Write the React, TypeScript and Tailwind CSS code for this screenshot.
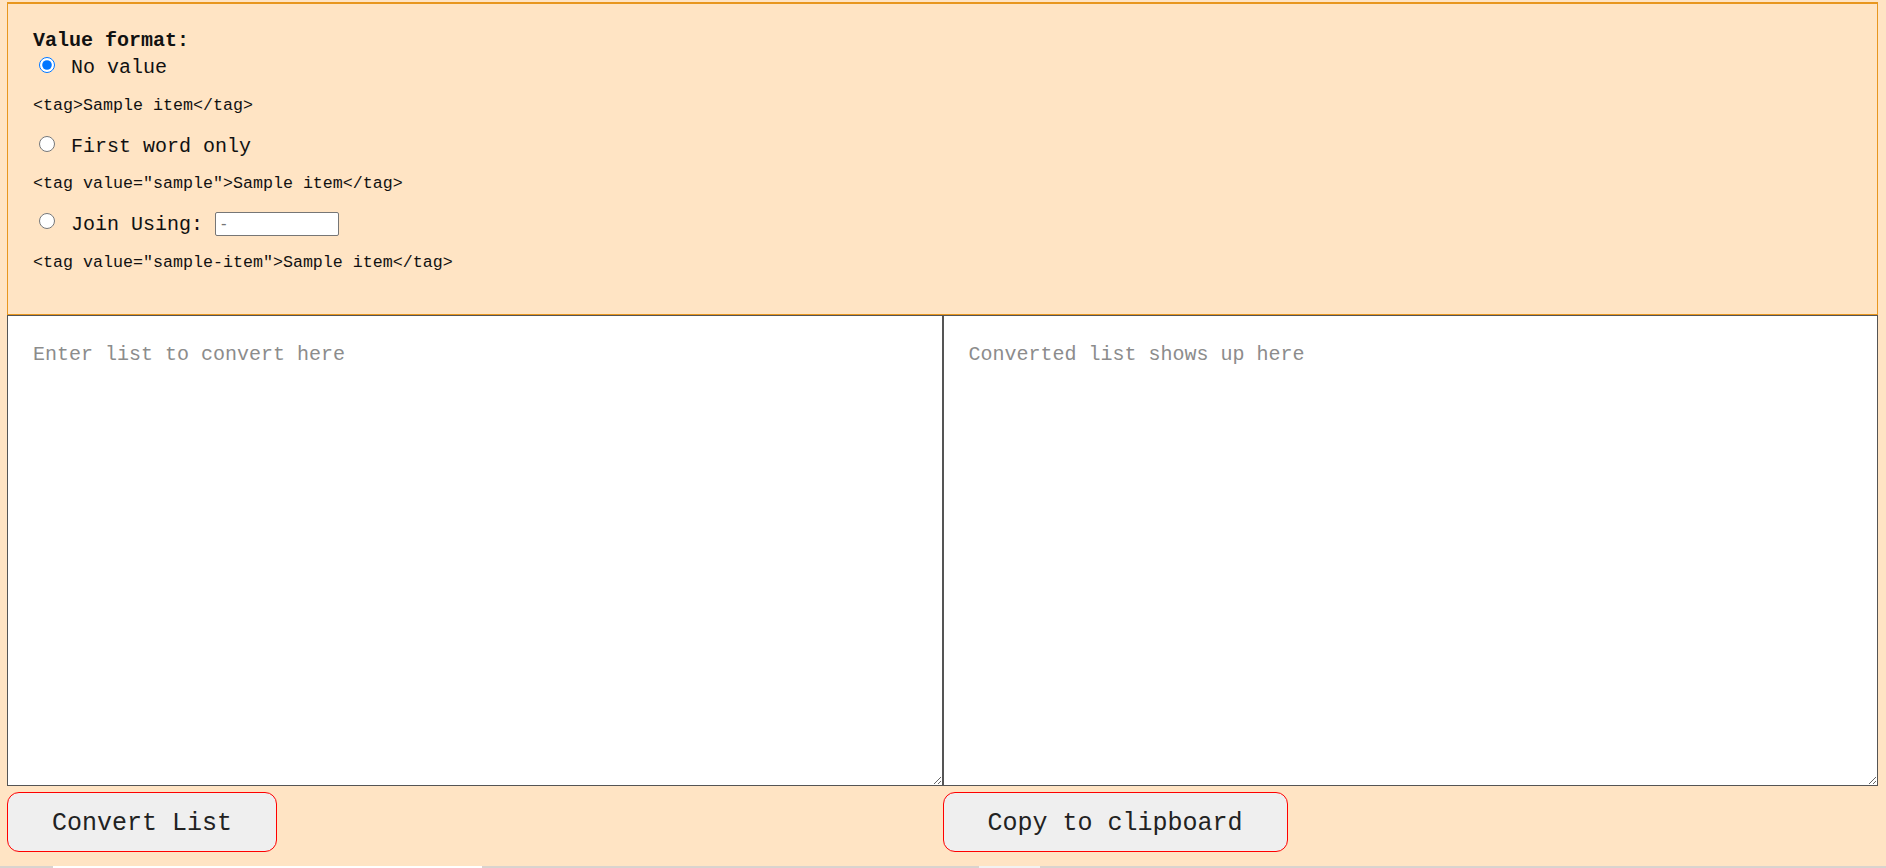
import React from "react";

function RadioRow({
  checked,
  label,
  className,
  children,
}: {
  checked?: boolean;
  label: string;
  className: string;
  children?: React.ReactNode;
}) {
  return (
    <div className={`flex h-[23px] items-center ${className}`}>
      <input
        type="radio"
        name="fmt"
        defaultChecked={checked}
        className="mb-[6px] ml-[6px] h-[16px] w-[16px] shrink-0"
      />
      <span className="ml-[16px] whitespace-pre text-[20px] leading-[23px]">{label}</span>
      {children}
    </div>
  );
}

export default function App() {
  return (
    <div className="min-h-[868px] bg-[#ffe4c4] pt-[2px] font-['Liberation_Mono','Courier_New',monospace] text-[#111]">
      <div className="ml-[7px] mr-[8px]">
        <div className="border-x border-b border-t-2 border-[#e8961e] px-[25px] pb-[42px] pt-[25px]">
          <div className="h-[23px] text-[20px] font-bold leading-[23px]">Value format:</div>
          <RadioRow className="mt-[4px]" checked label="No value" />
          <div className="mt-[17px] h-[19px] text-[16.67px] leading-[19px]">&lt;tag&gt;Sample item&lt;/tag&gt;</div>
          <RadioRow className="mt-[20px]" label="First word only" />
          <div className="mt-[16px] h-[19px] text-[16.67px] leading-[19px]">
            &lt;tag value="sample"&gt;Sample item&lt;/tag&gt;
          </div>
          <RadioRow className="mt-[19px] !h-[24px]" label="Join Using: ">
            <input
              type="text"
              placeholder="-"
              className="h-[24px] w-[124px] rounded-[2px] border border-[#767676] bg-white pl-[5px] font-['Liberation_Sans',Arial,sans-serif] text-[16.67px] text-black placeholder:text-[#757575]"
            />
          </RadioRow>
          <div className="mt-[17px] h-[19px] text-[16.67px] leading-[19px]">
            &lt;tag value="sample-item"&gt;Sample item&lt;/tag&gt;
          </div>
        </div>
        <div className="flex">
          <textarea
            placeholder="Enter list to convert here"
            className="h-[471px] w-1/2 border border-[#555] bg-white px-[25px] pb-[25px] pt-[24px] text-[20px] text-black placeholder:text-[#8c8c8c]"
          />
          <textarea
            placeholder="Converted list shows up here"
            className="h-[471px] w-1/2 border border-[#555] bg-white px-[25px] pb-[25px] pt-[24px] text-[20px] text-black placeholder:text-[#8c8c8c]"
          />
        </div>
        <div className="mt-[6px] grid grid-cols-2">
          <div>
            <button className="h-[60px] rounded-[12px] border border-[#ff0000] bg-[#efefef] px-[44px] pt-[3px] text-[25px] leading-none text-[#222]">
              Convert List
            </button>
          </div>
          <div>
            <button className="h-[60px] rounded-[12px] border border-[#ff0000] bg-[#efefef] px-[44px] pt-[3px] text-[25px] leading-none text-[#222]">
              Copy to clipboard
            </button>
          </div>
        </div>
      </div>
      <div className="mt-[14px] flex h-[2px] bg-[#d9d3cf]">
        <div className="w-[53px]" />
        <div className="w-[429px] bg-white" />
        <div className="w-[497px]" />
        <div className="w-[61px] bg-[#f2f2f2]" />
      </div>
    </div>
  );
}
